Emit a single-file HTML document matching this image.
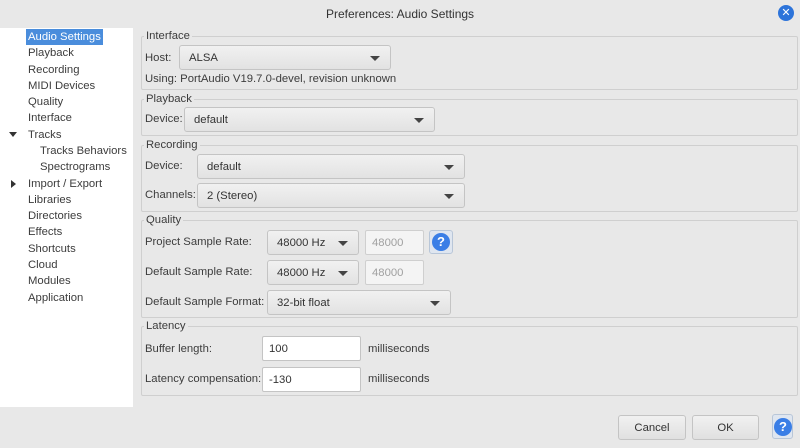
<!DOCTYPE html>
<html><head><style>
body{margin:0;width:800px;height:448px;background:#e8e8e8;font-family:"Liberation Sans","DejaVu Sans",sans-serif;font-size:11.3px;color:#3c3c3c;position:relative;overflow:hidden}
.a{position:absolute;white-space:nowrap}
.side{position:absolute;left:0;top:28px;width:133px;height:379px;background:#fff}
.grp{position:absolute;left:141px;width:655px;border:1px solid #cfcfcf;border-radius:2px}
.gl{position:absolute;background:#e8e8e8;padding:0 2px;left:2px;top:-8px;line-height:14px}
.dd{position:absolute;height:25px;border:1px solid #c4c4c4;border-radius:3px;background:linear-gradient(#f1f1f1,#e2e2e2);box-sizing:border-box;padding-left:9px;line-height:25px;color:#333}
.dd:after{content:"";position:absolute;right:10px;top:10px;border-left:5px solid transparent;border-right:5px solid transparent;border-top:5px solid #444}
.tx{position:absolute;height:25px;border:1px solid #cfcfcf;border-radius:2px;background:#f4f4f4;box-sizing:border-box;padding-left:6px;line-height:25px;color:#a0a0a0}
.tw{background:#fff;color:#333;border-color:#c4c4c4}
.btn{position:absolute;height:25px;border:1px solid #c4c4c4;border-radius:3px;background:linear-gradient(#f1f1f1,#e0e0e0);box-sizing:border-box;text-align:center;line-height:25px;color:#333}
.q{position:absolute;width:24px;height:24px;border:1px solid #b8c6d8;border-radius:3px;box-sizing:border-box;background:#dfe6f0}
.q b{position:absolute;left:2px;top:2px;width:18px;height:18px;border-radius:50%;background:#3a7ee6;color:#fff;font-weight:bold;font-size:13px;text-align:center;line-height:18px}
.si{position:absolute;left:28px;line-height:16px}
</style></head><body>
<div class="a" style="left:0;top:7px;width:800px;text-align:center;font-size:12px;color:#333">Preferences: Audio Settings</div>
<div class="a" style="left:778px;top:5px;width:16px;height:16px;border-radius:50%;background:#2d74da;color:#fff;font-size:11px;text-align:center;line-height:16px;font-weight:bold">✕</div>
<div class="side"></div>
<div class="si" style="left:26px;top:29px;background:#4a8ddc;color:#fff;padding:0 2px">Audio Settings</div>
<div class="si" style="top:45px">Playback</div>
<div class="si" style="top:62px">Recording</div>
<div class="si" style="top:78px">MIDI Devices</div>
<div class="si" style="top:94px">Quality</div>
<div class="si" style="top:110px">Interface</div>
<div class="a" style="left:9px;top:132px;border-left:4px solid transparent;border-right:4px solid transparent;border-top:5px solid #333"></div>
<div class="si" style="top:127px">Tracks</div>
<div class="si" style="left:40px;top:143px">Tracks Behaviors</div>
<div class="si" style="left:40px;top:159px">Spectrograms</div>
<div class="a" style="left:11px;top:180px;border-top:4px solid transparent;border-bottom:4px solid transparent;border-left:5px solid #333"></div>
<div class="si" style="top:176px">Import / Export</div>
<div class="si" style="top:192px">Libraries</div>
<div class="si" style="top:208px">Directories</div>
<div class="si" style="top:224px">Effects</div>
<div class="si" style="top:241px">Shortcuts</div>
<div class="si" style="top:257px">Cloud</div>
<div class="si" style="top:273px">Modules</div>
<div class="si" style="top:290px">Application</div>

<div class="grp" style="top:36px;height:52px"><div class="gl">Interface</div></div>
<div class="a" style="left:145px;top:52px">Host:</div>
<div class="dd" style="left:179px;top:45px;width:212px">ALSA</div>
<div class="a" style="left:145px;top:73px">Using: PortAudio V19.7.0-devel, revision unknown</div>

<div class="grp" style="top:99px;height:35px"><div class="gl">Playback</div></div>
<div class="a" style="left:145px;top:113px">Device:</div>
<div class="dd" style="left:184px;top:107px;width:251px">default</div>

<div class="grp" style="top:145px;height:65px"><div class="gl">Recording</div></div>
<div class="a" style="left:145px;top:160px">Device:</div>
<div class="dd" style="left:197px;top:154px;width:268px">default</div>
<div class="a" style="left:145px;top:189px">Channels:</div>
<div class="dd" style="left:197px;top:183px;width:268px">2 (Stereo)</div>

<div class="grp" style="top:220px;height:96px"><div class="gl">Quality</div></div>
<div class="a" style="left:145px;top:236px">Project Sample Rate:</div>
<div class="dd" style="left:267px;top:230px;width:92px">48000 Hz</div>
<div class="tx" style="left:365px;top:230px;width:59px">48000</div>
<div class="q" style="left:429px;top:230px"><b>?</b></div>
<div class="a" style="left:145px;top:266px">Default Sample Rate:</div>
<div class="dd" style="left:267px;top:260px;width:92px">48000 Hz</div>
<div class="tx" style="left:365px;top:260px;width:59px">48000</div>
<div class="a" style="left:145px;top:296px">Default Sample Format:</div>
<div class="dd" style="left:267px;top:290px;width:184px">32-bit float</div>

<div class="grp" style="top:326px;height:68px"><div class="gl">Latency</div></div>
<div class="a" style="left:145px;top:343px">Buffer length:</div>
<div class="tx tw" style="left:262px;top:336px;width:99px">100</div>
<div class="a" style="left:368px;top:343px">milliseconds</div>
<div class="a" style="left:145px;top:373px">Latency compensation:</div>
<div class="tx tw" style="left:262px;top:367px;width:99px">-130</div>
<div class="a" style="left:368px;top:373px">milliseconds</div>

<div class="btn" style="left:618px;top:415px;width:68px">Cancel</div>
<div class="btn" style="left:692px;top:415px;width:67px">OK</div>
<div class="q" style="left:772px;top:414px;width:21px;height:25px"><b style="left:1px;top:3px">?</b></div>
</body></html>
